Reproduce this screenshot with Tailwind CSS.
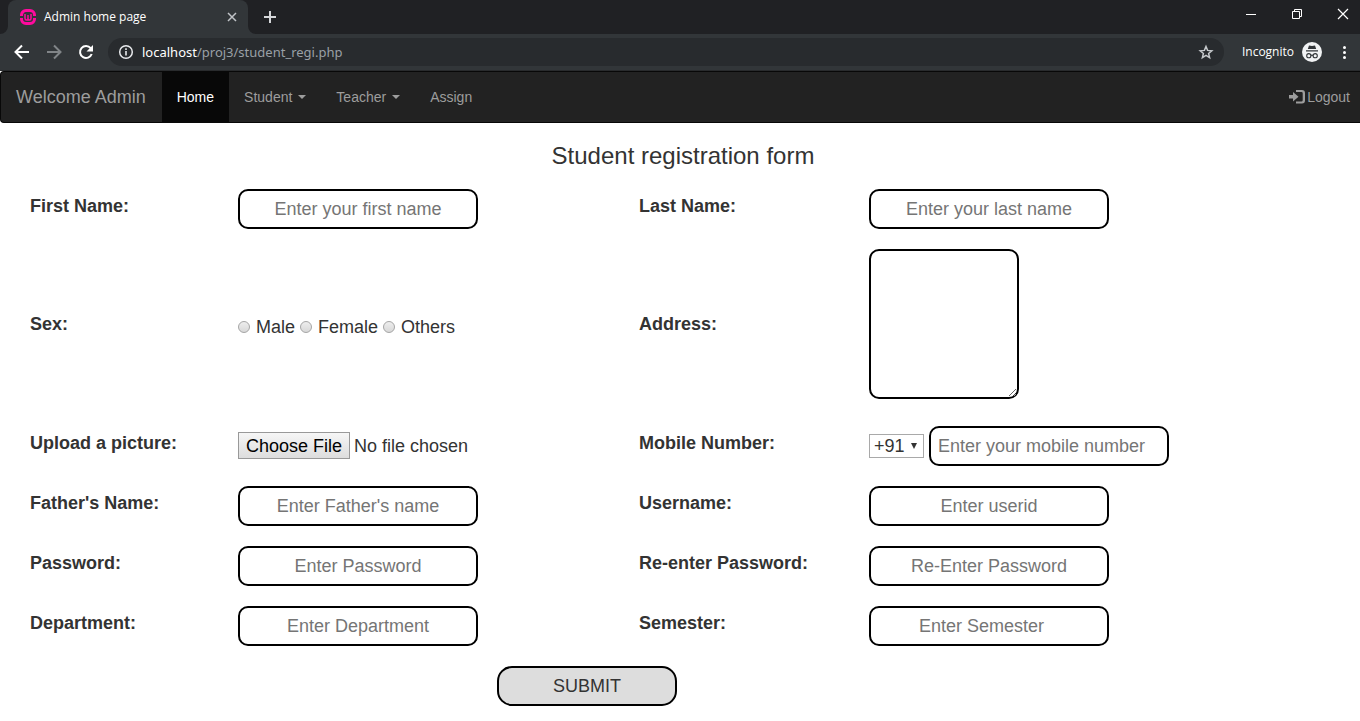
<!DOCTYPE html>
<html lang="en">
<head>
<meta charset="utf-8">
<meta name="viewport" content="width=device-width, initial-scale=1">
<title>Admin home page</title>
<script src="https://cdn.jsdelivr.net/npm/@tailwindcss/browser@4"></script>
</head>
<body class="bg-white font-['Liberation_Sans',Arial,sans-serif] text-lg/[26px] text-[#333]">

<!-- Browser window -->
<header class="bg-[#323639] font-['Open_Sans',sans-serif] text-white">
  <div class="flex h-[34px] items-end bg-[#202124]">
    <svg class="size-2 shrink-0" viewBox="0 0 8 8" aria-hidden="true"><path d="M8 0v8H0a8 8 0 0 0 8-8z" fill="#323639"/></svg>
    <div class="flex h-full w-60 items-center rounded-t-lg bg-[#323639] pr-2.5 pl-3">
      <svg class="size-4 shrink-0" viewBox="0 0 16 16" fill="none" stroke="#ff0a9e" aria-hidden="true">
        <path d="M1.500 7V6A4.500 4.500 0 0 1 6 1.500h4A4.500 4.500 0 0 1 14.500 6v1M14.500 9v1a4.500 4.500 0 0 1-4.500 4.500H6A4.500 4.500 0 0 1 1.500 10V9" stroke-width="3"/>
        <path d="M5 5v4.200q0 1.800 1.500 1.800T8 9.200V6v3.200q0 1.800 1.500 1.800T11 9.200V5" stroke-width="1.500"/>
      </svg>
      <span class="ml-2 grow text-xs">Admin home page</span>
      <button type="button" aria-label="Close tab"><svg class="size-3" viewBox="0 0 12 12" stroke="#c1c4c8" stroke-width="1.500"><path d="M2 2l8 8M10 2l-8 8"/></svg></button>
    </div>
    <svg class="size-2 shrink-0" viewBox="0 0 8 8" aria-hidden="true"><path d="M0 0v8h8a8 8 0 0 1-8-8z" fill="#323639"/></svg>
    <button type="button" aria-label="New tab" class="ml-2 flex h-full items-center"><svg class="size-3" viewBox="0 0 12 12" stroke="#d5d7da" stroke-width="2"><path d="M6 0v12M0 6h12"/></svg></button>
    <div class="ml-auto flex h-7 items-start gap-[34px] self-start pt-2 pr-[11px]">
      <button type="button" aria-label="Minimise"><svg class="size-3" viewBox="0 0 12 12" stroke="#fff"><path d="M1 6.500h10"/></svg></button>
      <button type="button" aria-label="Restore"><svg class="size-3" viewBox="0 0 12 12" fill="none" stroke="#fff"><path d="M1.500 3.500h7v7h-7zM3.500 3.500v-2h7v7h-2"/></svg></button>
      <button type="button" aria-label="Close"><svg class="size-3" viewBox="0 0 12 12" stroke="#fff" stroke-width="1.200"><path d="M1 1l10 10M11 1L1 11"/></svg></button>
    </div>
  </div>
  <div class="flex h-[37px] items-center border-b border-[#292b2d] pr-2 pl-3">
    <div class="flex items-center gap-3">
      <button type="button" aria-label="Back"><svg class="size-5" viewBox="0 0 20 20" fill="none" stroke="#fff" stroke-width="2"><path d="M17 10H4M10 3.500L3.500 10l6.500 6.500"/></svg></button>
      <button type="button" aria-label="Forward"><svg class="size-5" viewBox="0 0 20 20" fill="none" stroke="#818588" stroke-width="2"><path d="M3 10h13M10 3.500l6.500 6.500-6.500 6.500"/></svg></button>
      <button type="button" aria-label="Reload"><svg class="size-5" viewBox="0 0 20 20" fill="none" stroke="#fff" stroke-width="2"><path d="M15.700 12A6 6 0 1 1 14.700 6.200"/><path d="M17 3v6.500h-6.500z" fill="#fff" stroke="none"/></svg></button>
    </div>
    <div class="ml-3 flex h-7 grow items-center rounded-full bg-[#282b2e] pr-2.5 pl-2.5">
      <svg class="size-4 shrink-0" viewBox="0 0 16 16" fill="none" stroke="#e8eaed" aria-hidden="true"><circle cx="8" cy="8" r="6.300" stroke-width="1.500"/><path d="M8 7v4.500M8 4.300v1.700" stroke-width="1.600"/></svg>
      <a href="#" class="ml-2 grow font-['Noto_Sans',sans-serif] text-[13px] text-[#9aa0a6]"><span class="text-white">localhost</span>/proj3/student_regi.php</a>
      <button type="button" aria-label="Bookmark this page"><svg class="size-4" viewBox="0 0 16 16" fill="none" stroke="#c6c9cc" stroke-width="1.500"><path d="M8 2.500l1.600 3.900 4.200.4-3.200 2.700 1 4.100L8 11.400l-3.600 2.200 1-4.100-3.200-2.700 4.200-.4z"/></svg></button>
    </div>
    <span class="ml-[18px] text-xs">Incognito</span>
    <svg class="ml-2 size-5 shrink-0" viewBox="0 0 20 20" aria-hidden="true">
      <circle cx="10" cy="10" r="10" fill="#f1f3f4"/>
      <path d="M7 3.500l3 .6 3-.6 1.200 3.500H5.800zM4 8.300h12v1.200H4z" fill="#323639"/>
      <g fill="none" stroke="#323639" stroke-width="1.100"><circle cx="6.800" cy="13.700" r="2.100"/><circle cx="13.200" cy="13.700" r="2.100"/><path d="M8.900 13.500q1.100-.8 2.200 0"/></g>
    </svg>
    <button type="button" aria-label="Menu" class="ml-3.5"><svg class="size-4" viewBox="0 0 16 16" fill="#fff"><circle cx="8.500" cy="3.500" r="1.500"/><circle cx="8.500" cy="8.500" r="1.500"/><circle cx="8.500" cy="13.500" r="1.500"/></svg></button>
  </div>
</header>

<!-- Site navigation -->
<nav class="flex h-[52px] items-stretch rounded-l border-y border-l border-[#080808] bg-[#222] pr-2.5 text-sm text-[#9d9d9d]">
  <a href="#" class="flex items-center pr-4 pl-[15px] text-lg">Welcome Admin</a>
  <a href="#" class="flex items-center bg-[#080808] px-[15px] text-white">Home</a>
  <a href="#" class="flex items-center gap-1.5 px-[15px]">Student <span class="border-x-4 border-t-4 border-x-transparent border-t-[#9d9d9d]"></span></a>
  <a href="#" class="flex items-center gap-1.5 px-[15px]">Teacher <span class="border-x-4 border-t-4 border-x-transparent border-t-[#9d9d9d]"></span></a>
  <a href="#" class="flex items-center px-[15px]">Assign</a>
  <a href="#" class="ml-auto flex items-center gap-0.5">
    <svg class="h-3.5 w-4" viewBox="0 0 16 14" fill="#9d9d9d" aria-hidden="true"><path d="M0 5h4V2l5.500 4.700L4 11.500v-3H0zM7 0h6a3 3 0 0 1 3 3v7.500a3 3 0 0 1-3 3H7v-2h5.500a1.200 1.200 0 0 0 1.200-1.200V3.200A1.200 1.200 0 0 0 12.500 2H7z"/></svg>
    Logout</a>
</nav>

<!-- Registration form -->
<main>
  <h1 class="mt-5 pl-1.5 text-center text-2xl/[26px]">Student registration form</h1>
  <form class="mt-2.5 pl-[30px]">
    <div class="grid grid-cols-[208fr_401fr_230fr_491fr] items-center">
      <label for="first" class="pb-1.5 font-bold">First Name:</label>
      <div class="flex h-[60px] items-center"><input id="first" type="text" placeholder="Enter your first name" class="h-10 w-60 rounded-[10px] border-2 border-black text-center placeholder:text-[#757575]"></div>
      <label for="last" class="pb-1.5 font-bold">Last Name:</label>
      <div><input id="last" type="text" placeholder="Enter your last name" class="block h-10 w-60 rounded-[10px] border-2 border-black text-center placeholder:text-[#757575]"></div>

      <span id="sex" class="pb-2 font-bold">Sex:</span>
      <div role="radiogroup" aria-labelledby="sex" class="flex items-center gap-[5px] pb-0.5">
        <label class="flex items-center gap-1.5"><input type="radio" name="sex" class="size-3 appearance-none rounded-full border border-[#a5a5a5] bg-linear-to-b from-[#eee] to-[#d8d8d8]">Male</label>
        <label class="flex items-center gap-1.5"><input type="radio" name="sex" class="size-3 appearance-none rounded-full border border-[#a5a5a5] bg-linear-to-b from-[#eee] to-[#d8d8d8]">Female</label>
        <label class="flex items-center gap-1.5"><input type="radio" name="sex" class="size-3 appearance-none rounded-full border border-[#a5a5a5] bg-linear-to-b from-[#eee] to-[#d8d8d8]">Others</label>
      </div>
      <label for="address" class="pb-2 font-bold">Address:</label>
      <div class="pt-2.5 pb-[17px]"><textarea id="address" class="block size-[150px] resize rounded-[10px] border-2 border-black"></textarea></div>

      <label for="picture" class="pb-1.5 font-bold">Upload a picture:</label>
      <div class="flex h-[60px] items-center pb-0.5"><input id="picture" type="file" class="h-[27px] file:mr-1 file:h-[27px] file:border file:border-solid file:border-[#999] file:bg-linear-to-b file:from-[#f6f6f6] file:to-[#ddd] file:px-[7px] file:pb-0.5 file:text-black"></div>
      <label for="mobile" class="pb-1.5 font-bold">Mobile Number:</label>
      <div class="flex items-center gap-[5px]">
        <div class="grid items-center">
          <select aria-label="Country code" class="col-start-1 row-start-1 h-6 w-[55px] appearance-none border border-[#a9a9a9] bg-white pl-1 text-lg/[22px]"><option>+91</option></select>
          <svg class="pointer-events-none col-start-1 row-start-1 mr-1.5 h-1.5 w-2 justify-self-end" viewBox="0 0 8 6" fill="#333" aria-hidden="true"><path d="M1 0h6L4 6z"/></svg>
        </div>
        <input id="mobile" type="tel" placeholder="Enter your mobile number" class="h-10 w-60 rounded-[10px] border-2 border-black px-[7px] placeholder:text-[#757575]">
      </div>

      <label for="father" class="pb-1.5 font-bold">Father's Name:</label>
      <div class="flex h-[60px] items-center"><input id="father" type="text" placeholder="Enter Father's name" class="h-10 w-60 rounded-[10px] border-2 border-black text-center placeholder:text-[#757575]"></div>
      <label for="user" class="pb-1.5 font-bold">Username:</label>
      <div><input id="user" type="text" placeholder="Enter userid" class="block h-10 w-60 rounded-[10px] border-2 border-black text-center placeholder:text-[#757575]"></div>

      <label for="pass" class="pb-1.5 font-bold">Password:</label>
      <div class="flex h-[60px] items-center"><input id="pass" type="password" placeholder="Enter Password" class="h-10 w-60 rounded-[10px] border-2 border-black text-center placeholder:text-[#757575]"></div>
      <label for="repass" class="pb-1.5 font-bold">Re-enter Password:</label>
      <div><input id="repass" type="password" placeholder="Re-Enter Password" class="block h-10 w-60 rounded-[10px] border-2 border-black text-center placeholder:text-[#757575]"></div>

      <label for="dept" class="pb-1.5 font-bold">Department:</label>
      <div class="flex h-[60px] items-center"><input id="dept" type="text" placeholder="Enter Department" class="h-10 w-60 rounded-[10px] border-2 border-black text-center placeholder:text-[#757575]"></div>
      <label for="sem" class="pb-1.5 font-bold">Semester:</label>
      <div><input id="sem" type="text" placeholder="Enter Semester" class="block h-10 w-60 rounded-[10px] border-2 border-black pr-[15px] text-center placeholder:text-[#757575]"></div>
    </div>
    <div class="flex justify-center py-2.5 pr-[216px]">
      <button type="submit" class="h-10 w-[180px] rounded-[15px] border-2 border-black bg-[#ddd]">SUBMIT</button>
    </div>
  </form>
</main>
</body>
</html>
